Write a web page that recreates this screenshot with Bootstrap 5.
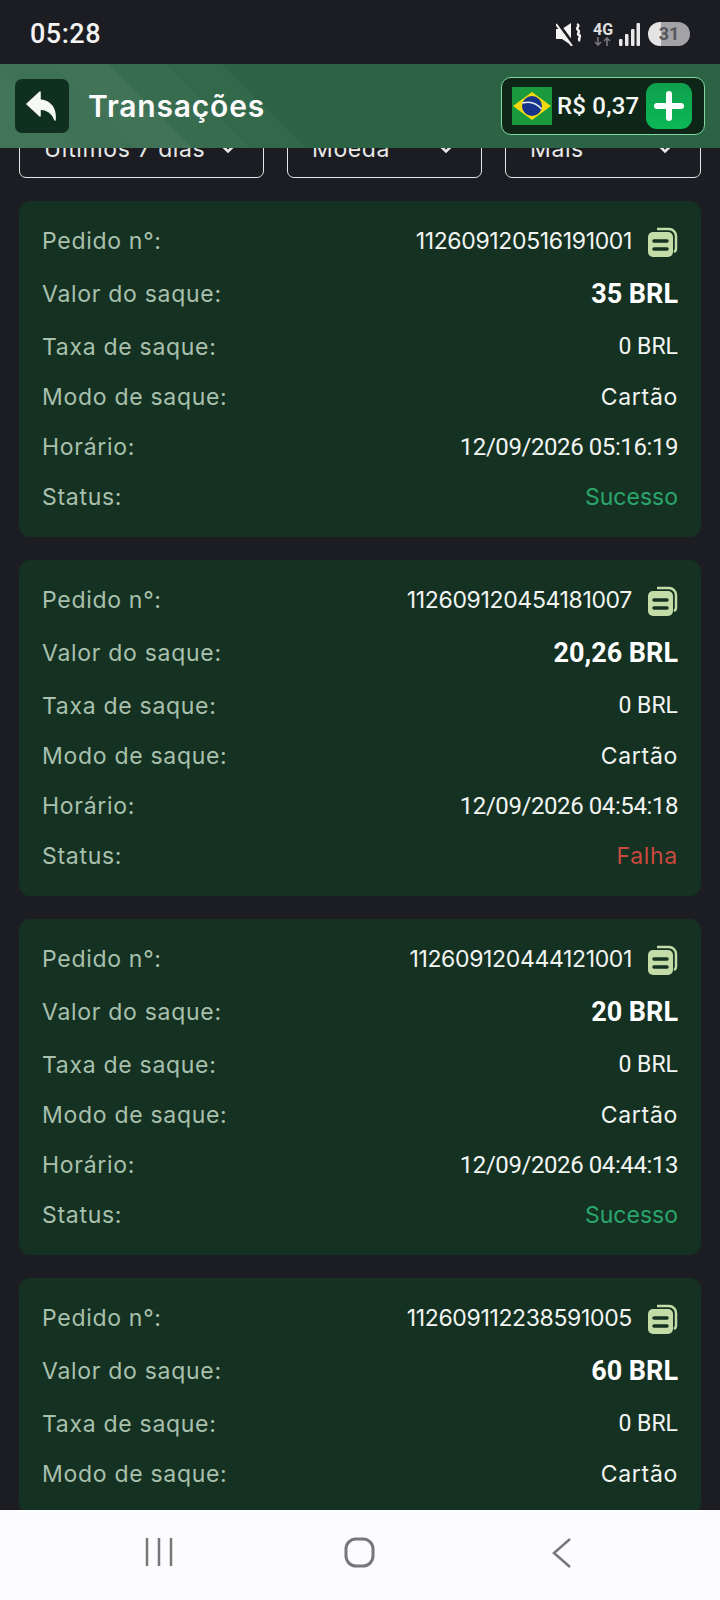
<!DOCTYPE html>
<html lang="pt-BR">
<head>
    <meta charset="UTF-8">
    <meta name="viewport" content="width=device-width, initial-scale=1.0">
    <title>Transações</title>
    <link href="https://cdn.jsdelivr.net/npm/bootstrap@5.3.2/dist/css/bootstrap.min.css" rel="stylesheet">
    <style>
        html, body {
            height: 1600px;
            overflow: hidden;
        }
        body {
            background: #1c1d22;
            font-family: Inter, "Liberation Sans", sans-serif;
            color: #f2f5f2;
        }
        .phone-screen {
            height: 1600px;
        }
        .status-bar {
            height: 64px;
            padding: 4px 30px 0 30px;
        }
        .status-time {
            font-family: Roboto, sans-serif;
            font-size: 27px;
            font-weight: 500;
            color: #f4f4f4;
            letter-spacing: .5px;
        }
        .status-icons {
            gap: 3px;
        }
        .net-type {
            width: 26px;
            font-family: Roboto, sans-serif;
            font-size: 16px;
            font-weight: 700;
            line-height: 14px;
            color: #e0e0e0;
        }
        .battery-pill {
            width: 42px;
            height: 24px;
            border-radius: 12px;
            background: linear-gradient(90deg, #e4e4e4 0 30%, #a3a3a6 30%);
            font-family: Roboto, sans-serif;
            font-size: 18px;
            font-weight: 700;
            line-height: 24px;
            color: #55555a;
            margin-left: 5px;
        }
        .top-header {
            height: 84px;
            padding: 0 15px;
            position: relative;
            z-index: 2;
            background-color: #2b6344;
            background-image:
                linear-gradient(45deg, rgba(255,255,255,.11) 0 10%, rgba(255,255,255,.09) 10% 17%, rgba(255,255,255,.10) 17% 24%, rgba(255,255,255,.06) 24% 31%, rgba(255,255,255,.04) 31% 38%, rgba(255,255,255,0) 38%);
        }
        .back-btn {
            width: 54px;
            height: 54px;
            background: #10301f;
            border-radius: 7px;
        }
        .page-title {
            font-size: 30px;
            font-weight: 600;
            margin-left: 19px;
            color: #fbfbfb;
            letter-spacing: .8px;
        }
        .balance-box {
            width: 204px;
            height: 58px;
            background: #0e2618;
            border: 1px solid #7fd9a0;
            border-radius: 10px;
            padding: 0 12px 0 10px;
        }
        .balance-text {
            font-family: Roboto, sans-serif;
            font-size: 24px;
            font-weight: 500;
            letter-spacing: .2px;
            margin-left: 5px;
            color: #f5f7f5;
            white-space: nowrap;
        }
        .add-btn {
            width: 46px;
            height: 46px;
            border-radius: 11px;
            background: linear-gradient(180deg, #0ea04c, #0cb856);
        }
        .filter-row {
            margin: -28px 19px 0 19px;
            gap: 23px;
        }
        .filter-select {
            height: 58px;
            border: 1.5px solid #e6e6e6;
            border-radius: 7px;
            background: transparent;
            font-size: 23px;
            letter-spacing: .6px;
            color: #e8e8e8;
            padding: 0 28px 0 24px;
        }
        .filter-wide { width: 245px; }
        .filter-mid { width: 195px; }
        .filter-end { width: 196px; }
        .cards-area {
            padding: 23px 19px 0 19px;
            min-height: 0;
            overflow: hidden;
        }
        .order-card {
            flex: none;
            background: #153122;
            border-radius: 11px;
            padding: 16px 23px 15px 23px;
            margin-bottom: 23px;
        }
        .info-row {
            height: 50px;
        }
        .info-row.row-short {
            height: 49px;
        }
        .info-row.row-amount {
            height: 57px;
        }
        .info-label {
            font-size: 23px;
            letter-spacing: .7px;
            color: #a8c0ad;
        }
        .info-value {
            font-size: 23px;
            color: #f2f5f2;
        }
        .id-value {
            letter-spacing: -.35px;
        }
        .wide-value {
            letter-spacing: .7px;
        }
        .num-value {
            font-family: Roboto, sans-serif;
            font-size: 23px;
        }
        .date-value {
            font-size: 24px;
            letter-spacing: -.42px;
        }
        .amount-value {
            font-family: Roboto, sans-serif;
            font-size: 27px;
            font-weight: 700;
            color: #fff;
        }
        .status-ok { color: #2aa56c; }
        .status-fail { color: #c8493f; }
        .copy-icon {
            margin-left: 16px;
            flex: none;
        }
        .bottom-nav {
            height: 90px;
            flex: none;
            background: #fcfcfe;
            position: relative;
            z-index: 3;
        }
        .bottom-nav svg {
            position: absolute;
            top: 27px;
        }
    </style>
</head>
<body>
    <div class="phone-screen d-flex flex-column">
        <!-- Status bar -->
        <div class="status-bar d-flex align-items-center justify-content-between flex-shrink-0">
            <span class="status-time">05:28</span>
            <div class="status-icons d-flex align-items-center">
                <svg width="27" height="24" viewBox="0 0 27 24">
                    <path d="M0 7h6l9-6v22l-9-6H0z" fill="#f4f4f4"/>
                    <path d="M1 0l17 23" stroke="#1c1d22" stroke-width="3"/>
                    <path d="M0 2l16 22" stroke="#f4f4f4" stroke-width="2"/>
                    <path d="M21 2c4 2-2 4 1 6s-2 4 1 5-2 4 1 6" fill="none" stroke="#f4f4f4" stroke-width="2.400"/>
                </svg>
                <div class="net-type text-center ms-1">
                    4G
                    <svg class="d-block mx-auto" width="18" height="9" viewBox="0 0 18 9">
                        <path d="M4 0v8M1 5l3 3 3-3" fill="none" stroke="#77777c" stroke-width="1.6"/>
                        <path d="M13 9V1M10 4l3-3 3 3" fill="none" stroke="#77777c" stroke-width="1.6"/>
                    </svg>
                </div>
                <svg width="21" height="23" viewBox="0 0 21 23" fill="#e8e8e8">
                    <rect x="0" y="16" width="3.5" height="7" rx="1"/>
                    <rect x="6" y="11" width="3.5" height="12" rx="1"/>
                    <rect x="12" y="6" width="3.5" height="17" rx="1"/>
                    <rect x="17.500" y="0" width="3.5" height="23" rx="1"/>
                </svg>
                <div class="battery-pill text-center">31</div>
            </div>
        </div>

        <!-- Header -->
        <div class="top-header d-flex align-items-center justify-content-between flex-shrink-0">
            <div class="d-flex align-items-center">
                <div class="back-btn d-flex align-items-center justify-content-center">
                    <svg width="32" height="30" viewBox="0 0 32 30">
                        <path d="M14 1L1 13l13 12v-7c7 0 12 3 15 11 1-11-4-19-15-20z" fill="#f7f9f7" stroke="#f7f9f7" stroke-width="1.500" stroke-linejoin="round"/>
                    </svg>
                </div>
                <span class="page-title">Transações</span>
            </div>
            <div class="balance-box d-flex align-items-center justify-content-between">
                <div class="d-flex align-items-center">
                    <svg width="40" height="38" viewBox="0 0 40 38">
                        <rect width="40" height="38" fill="#1a9a3c"/>
                        <path d="M20 5l19 14-19 14L1 19z" fill="#f3d812"/>
                        <circle cx="20" cy="19" r="10" fill="#16348c"/>
                        <path d="M10.500 16c7-2 14 0 19 6" fill="none" stroke="#e8edf5" stroke-width="1.500"/>
                    </svg>
                    <span class="balance-text">R$ 0,37</span>
                </div>
                <div class="add-btn d-flex align-items-center justify-content-center">
                    <svg width="30" height="30" viewBox="0 0 30 30">
                        <path d="M15 3v24M3 15h24" stroke="#fff" stroke-width="6" stroke-linecap="round"/>
                    </svg>
                </div>
            </div>
        </div>

        <!-- Filters, partly under the header -->
        <div class="filter-row d-flex flex-shrink-0">
            <div class="filter-select filter-wide d-flex align-items-center justify-content-between">
                <span>Últimos 7 dias</span>
                <svg width="14" height="9" viewBox="0 0 14 9"><path d="M2 1.500l5 5 5-5" fill="none" stroke="#e8e8e8" stroke-width="2.500"/></svg>
            </div>
            <div class="filter-select filter-mid d-flex align-items-center justify-content-between">
                <span>Moeda</span>
                <svg width="14" height="9" viewBox="0 0 14 9"><path d="M2 1.500l5 5 5-5" fill="none" stroke="#e8e8e8" stroke-width="2.500"/></svg>
            </div>
            <div class="filter-select filter-end d-flex align-items-center justify-content-between">
                <span>Mais</span>
                <svg width="14" height="9" viewBox="0 0 14 9"><path d="M2 1.500l5 5 5-5" fill="none" stroke="#e8e8e8" stroke-width="2.500"/></svg>
            </div>
        </div>

        <!-- Transactions, filled in below -->
        <div class="cards-area flex-grow-1 d-flex flex-column" id="cardsArea"></div>

        <!-- Android nav -->
        <div class="bottom-nav">
            <svg style="left:145px" width="28" height="30" viewBox="0 0 28 30">
                <path d="M2 1v28M14 1v28M26 1v28" stroke="#77777a" stroke-width="2.500"/>
            </svg>
            <svg style="left:344px" width="32" height="32" viewBox="0 0 32 32">
                <rect x="2" y="2" width="27" height="27" rx="10" fill="none" stroke="#77777a" stroke-width="3"/>
            </svg>
            <svg style="left:551px" width="22" height="32" viewBox="0 0 22 32">
                <path d="M19 2L3 16l16 14" fill="none" stroke="#77777a" stroke-width="2.500"/>
            </svg>
        </div>
    </div>

    <script src="https://cdn.jsdelivr.net/npm/bootstrap@5.3.2/dist/js/bootstrap.bundle.min.js"></script>
    <script>
        // last order runs under the nav bar, only its first rows are on screen
        const orders = [
            { id: '112609120516191001', amount: '35 BRL', date: '12/09/2026 05:16:19', ok: true },
            { id: '112609120454181007', amount: '20,26 BRL', date: '12/09/2026 04:54:18', ok: false },
            { id: '112609120444121001', amount: '20 BRL', date: '12/09/2026 04:44:13', ok: true },
            { id: '112609112238591005', amount: '60 BRL' }
        ];

        const copyIcon = `
            <svg class="copy-icon" width="30" height="31" viewBox="0 0 30 31">
                <path d="M9 3h12a7 7 0 0 1 7 7V23a4 4 0 0 1-2 3" fill="none" stroke="#c3dca8" stroke-width="2.500"/>
                <rect x="0" y="6" width="25" height="25" rx="5" fill="#c3dca8"/>
                <path d="M6 15h13M6 23h13" stroke="#153122" stroke-width="3.500" stroke-linecap="round"/>
            </svg>`;

        function infoRow(label, value, rowClass) {
            return `
                <div class="info-row ${rowClass || ''} d-flex align-items-center justify-content-between">
                    <span class="info-label">${label}:</span>
                    ${value}
                </div>`;
        }

        const cardsArea = document.getElementById('cardsArea');
        orders.forEach(order => {
            const card = document.createElement('div');
            card.classList.add('order-card');
            let rows =
                infoRow('Pedido n°', `<span class="d-flex align-items-center"><span class="info-value id-value">${order.id}</span>${copyIcon}</span>`, 'row-short') +
                infoRow('Valor do saque', `<span class="amount-value">${order.amount}</span>`, 'row-amount') +
                infoRow('Taxa de saque', '<span class="info-value num-value">0 BRL</span>', 'row-short') +
                infoRow('Modo de saque', '<span class="info-value wide-value">Cartão</span>');
            if (order.date) {
                rows +=
                    infoRow('Horário', `<span class="info-value num-value date-value">${order.date}</span>`) +
                    infoRow('Status', order.ok
                        ? '<span class="info-value status-ok">Sucesso</span>'
                        : '<span class="info-value wide-value status-fail">Falha</span>');
            }
            card.innerHTML = rows;
            cardsArea.appendChild(card);
        });
    </script>
</body>
</html>
